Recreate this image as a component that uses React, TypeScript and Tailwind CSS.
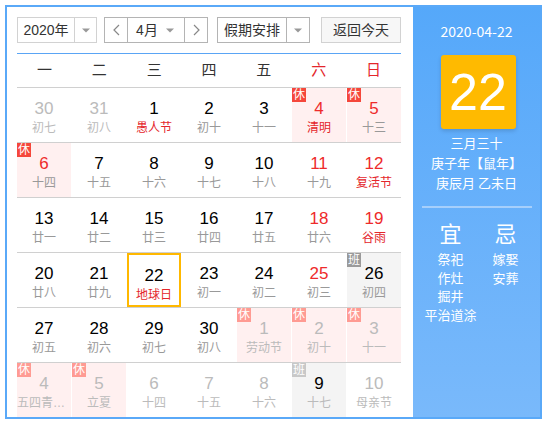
import React from 'react';

type Day = {
  d: number;
  l: string;
  other?: boolean;
  red?: boolean;
  fest?: boolean;
  rest?: boolean;
  work?: boolean;
  today?: boolean;
};

const weeks: Day[][] = [
  [
    { d: 30, l: '初七', other: true },
    { d: 31, l: '初八', other: true },
    { d: 1, l: '愚人节', fest: true },
    { d: 2, l: '初十' },
    { d: 3, l: '十一' },
    { d: 4, l: '清明', red: true, fest: true, rest: true },
    { d: 5, l: '十三', red: true, rest: true },
  ],
  [
    { d: 6, l: '十四', red: true, rest: true },
    { d: 7, l: '十五' },
    { d: 8, l: '十六' },
    { d: 9, l: '十七' },
    { d: 10, l: '十八' },
    { d: 11, l: '十九', red: true },
    { d: 12, l: '复活节', red: true, fest: true },
  ],
  [
    { d: 13, l: '廿一' },
    { d: 14, l: '廿二' },
    { d: 15, l: '廿三' },
    { d: 16, l: '廿四' },
    { d: 17, l: '廿五' },
    { d: 18, l: '廿六', red: true },
    { d: 19, l: '谷雨', red: true, fest: true },
  ],
  [
    { d: 20, l: '廿八' },
    { d: 21, l: '廿九' },
    { d: 22, l: '地球日', fest: true, today: true },
    { d: 23, l: '初一' },
    { d: 24, l: '初二' },
    { d: 25, l: '初三', red: true },
    { d: 26, l: '初四', work: true },
  ],
  [
    { d: 27, l: '初五' },
    { d: 28, l: '初六' },
    { d: 29, l: '初七' },
    { d: 30, l: '初八' },
    { d: 1, l: '劳动节', other: true, rest: true },
    { d: 2, l: '初十', other: true, rest: true },
    { d: 3, l: '十一', other: true, rest: true },
  ],
  [
    { d: 4, l: '五四青年节', other: true, rest: true },
    { d: 5, l: '立夏', other: true, rest: true },
    { d: 6, l: '十四', other: true },
    { d: 7, l: '十五', other: true },
    { d: 8, l: '十六', other: true },
    { d: 9, l: '十七', other: true, work: true },
    { d: 10, l: '母亲节', other: true },
  ],
];

const heads = ['一', '二', '三', '四', '五', '六', '日'];

function Caret() {
  return (
    <svg width="8" height="5" viewBox="0 0 8 5">
      <path d="M0 0.5 L8 0.5 L4 4.5 Z" fill="#999" />
    </svg>
  );
}

function Chevron({ dir }: { dir: 'l' | 'r' }) {
  return (
    <svg width="7" height="12" viewBox="0 0 7 12">
      <polyline
        points={dir === 'l' ? '6,1 1,6 6,11' : '1,1 6,6 1,11'}
        fill="none"
        stroke="#888"
        strokeWidth="1.2"
      />
    </svg>
  );
}

function DayCell({ day }: { day: Day }) {
  let bg = 'bg-white';
  if (day.rest) bg = 'bg-[#fff0f0]';
  if (day.work) bg = 'bg-[#f4f4f4]';

  let numColor = 'text-black';
  if (day.other) numColor = day.work ? 'text-black' : 'text-[#bbbbbb]';
  else if (day.red) numColor = 'text-[#ee2b2b]';

  let lunarColor = 'text-[#999999]';
  if (day.other) lunarColor = 'text-[#bbbbbb]';
  else if (day.fest) lunarColor = 'text-[#e4262b]';

  const badgeBg = day.rest
    ? day.other
      ? 'bg-[#ff9b93]'
      : 'bg-[#f5473b]'
    : day.other
      ? 'bg-[#c8c8c8]'
      : 'bg-[#9a9a9a]';

  return (
    <div
      className={`relative h-full flex flex-col items-center pt-[10px] ${bg} ${
        day.today ? 'border-2 border-[#ffb800] pt-[8px]' : ''
      }`}
    >
      {(day.rest || day.work) && (
        <span
          className={`absolute left-0 top-0 w-[14px] h-[14px] ${badgeBg} text-white text-[12px] leading-[14px] text-center`}
        >
          {day.rest ? '休' : '班'}
        </span>
      )}
      <span className={`text-[17px] leading-[22px] ${numColor}`}>{day.d}</span>
      <span className={`w-full truncate text-center text-[12px] leading-[16px] ${lunarColor}`}>
        {day.l}
      </span>
    </div>
  );
}

export default function App() {
  return (
    <div className="w-[546px] h-[421px] bg-white pt-[5px] pl-[5px] font-['Liberation_Sans','Noto_Sans_CJK_SC',sans-serif]">
      <div className="w-[537px] h-[414px] border-2 border-[#5aa9f8] flex overflow-hidden">
        <div className="w-[406px] shrink-0 pl-[10px] pr-[12px] pt-[10px]">
          <div className="flex items-center h-[26px] text-[14px] text-[#333]">
            <div className="w-[80px] h-full border border-[#d2d2d2] flex">
              <div className="w-[56px] flex items-center justify-center">2020年</div>
              <div className="flex-1 border-l border-[#d2d2d2] flex items-center justify-center">
                <Caret />
              </div>
            </div>
            <div className="ml-[7px] w-[104px] h-full border border-[#b4b4b4] flex">
              <div className="w-[22px] flex items-center justify-center">
                <Chevron dir="l" />
              </div>
              <div className="flex-1 border-x border-[#b4b4b4] flex items-center">
                <span className="w-[38px] text-center">4月</span>
                <Caret />
              </div>
              <div className="w-[22px] flex items-center justify-center">
                <Chevron dir="r" />
              </div>
            </div>
            <div className="ml-[9px] w-[93px] h-full border border-[#b4b4b4] flex">
              <div className="w-[68px] flex items-center justify-center">假期安排</div>
              <div className="flex-1 border-l border-[#b4b4b4] flex items-center justify-center">
                <Caret />
              </div>
            </div>
            <button className="ml-[11px] w-[80px] h-full border border-[#d2d2d2] bg-[#f7f7f7] text-[14px] text-[#333]">
              返回今天
            </button>
          </div>

          <div className="mt-[10px] h-[35px] border-t border-[#5aa5f5] border-b border-b-[#d0d0d0] grid grid-cols-7 items-center">
            {heads.map((h, i) => (
              <div
                key={h}
                className={`text-center text-[15px] ${i >= 5 ? 'text-[#e4262b]' : 'text-[#333]'}`}
              >
                {h}
              </div>
            ))}
          </div>

          {weeks.map((w, wi) => (
            <div key={wi} className="h-[55px] border-b border-[#d0d0d0] grid grid-cols-7 gap-x-px">
              {w.map((day, di) => (
                <DayCell key={di} day={day} />
              ))}
            </div>
          ))}
        </div>

        <div className="flex-1 bg-gradient-to-b from-[#55a8fa] to-[#79b9fb] flex flex-col items-center text-white font-['Noto_Sans_CJK_SC','Liberation_Sans',sans-serif]">
          <div className="mt-[14px] text-[14px] leading-[20px]">2020-04-22</div>
          <div className="mt-[14px] ml-[3px] w-[75px] h-[74px] rounded-[3px] bg-[#ffba00] shadow-[0_2px_4px_rgba(0,0,0,0.15)] flex items-center justify-center">
            <span className="text-[52px] leading-none text-white font-['Liberation_Sans',sans-serif]">22</span>
          </div>
          <div className="mt-[4px] text-[13px] leading-[20px] text-center">
            <div>三月三十</div>
            <div>庚子年【鼠年】</div>
            <div>庚辰月 乙未日</div>
          </div>
          <div className="mt-[13px] w-[110px] h-[2px] bg-[#a6cffb]" />
          <div className="mt-[10px] flex ml-[3px]">
            <div className="w-[55px] flex flex-col items-center">
              <div className="text-[22px] leading-[28px]">宜</div>
              <div className="mt-[4px] text-[13px] leading-[18.5px] text-center whitespace-nowrap">
                <div>祭祀</div>
                <div>作灶</div>
                <div>掘井</div>
                <div>平治道涂</div>
              </div>
            </div>
            <div className="w-[55px] flex flex-col items-center">
              <div className="text-[22px] leading-[28px]">忌</div>
              <div className="mt-[4px] text-[13px] leading-[18.5px] text-center">
                <div>嫁娶</div>
                <div>安葬</div>
              </div>
            </div>
          </div>
        </div>
      </div>
    </div>
  );
}
